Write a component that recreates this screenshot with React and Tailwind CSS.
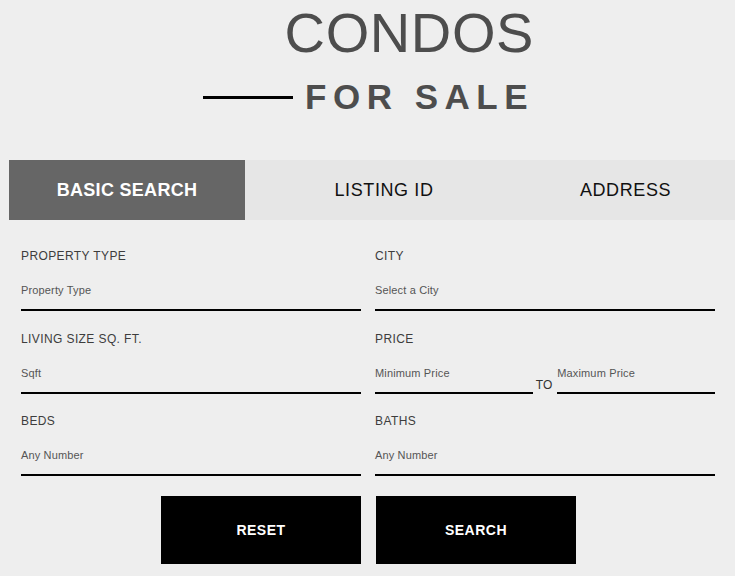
import React from "react";

function Field({ label, placeholder }) {
  return (
    <div className="flex flex-col">
      <div className="text-[12px] leading-none tracking-[0.4px] text-[#3d3d3d]">{label}</div>
      <div className="mt-[23px] border-b-2 border-black pb-[13px] text-[11px] leading-none tracking-[0.15px] text-[#555555]">
        {placeholder}
      </div>
    </div>
  );
}

function PriceField() {
  return (
    <div className="flex flex-col">
      <div className="text-[12px] leading-none tracking-[0.4px] text-[#3d3d3d]">PRICE</div>
      <div className="mt-[23px] flex items-end">
        <div className="flex-1 border-b-2 border-black pb-[13px] text-[11px] leading-none tracking-[0.15px] text-[#555555]">
          Minimum Price
        </div>
        <div className="ml-[3px] mr-[5px] mb-[3px] text-[12px] leading-none text-[#333333]">TO</div>
        <div className="flex-1 border-b-2 border-black pb-[13px] text-[11px] leading-none tracking-[0.15px] text-[#555555]">
          Maximum Price
        </div>
      </div>
    </div>
  );
}

export default function App() {
  return (
    <div className="min-h-screen bg-[#eeeeee] font-['Liberation_Sans',Arial,sans-serif] overflow-hidden">
      <div className="flex flex-col items-end pr-[201px] pt-[5px]">
        <h1 className="text-[56px] leading-none font-normal tracking-[0.6px] text-[#4d4d4d]">CONDOS</h1>
        <div className="mt-[18px] flex items-start">
          <span className="mt-[17px] mr-[12px] block h-[3px] w-[90px] bg-black" />
          <span className="text-[35px] leading-none font-bold tracking-[6.5px] text-[#4d4d4d]">FOR SALE</span>
        </div>
      </div>

      <div className="mt-[46px] ml-[9px] flex h-[60px]">
        <div className="flex w-[236px] items-center justify-center bg-[#666666] text-[18px] font-bold tracking-[0.3px] text-white">
          BASIC SEARCH
        </div>
        <div className="flex w-[278px] items-center justify-center bg-[#e6e6e6] text-[18px] tracking-[0.6px] text-[#111111]">
          LISTING ID
        </div>
        <div className="flex flex-1 items-center justify-center bg-[#e6e6e6] pr-[7px] text-[18px] tracking-[0.6px] text-[#111111]">
          ADDRESS
        </div>
      </div>

      <div className="ml-[21px] mt-[30px] grid w-[694px] grid-cols-2 gap-x-[14px] gap-y-[21.5px]">
        <Field label="PROPERTY TYPE" placeholder="Property Type" />
        <Field label="CITY" placeholder="Select a City" />
        <Field label="LIVING SIZE SQ. FT." placeholder="Sqft" />
        <PriceField />
        <Field label="BEDS" placeholder="Any Number" />
        <Field label="BATHS" placeholder="Any Number" />
      </div>

      <div className="mt-[20px] flex gap-[15px] pl-[161px]">
        <button className="flex h-[68px] w-[200px] items-center justify-center bg-black text-[14px] font-bold tracking-[0.5px] text-white">
          RESET
        </button>
        <button className="flex h-[68px] w-[200px] items-center justify-center bg-black text-[14px] font-bold tracking-[0.5px] text-white">
          SEARCH
        </button>
      </div>
    </div>
  );
}
